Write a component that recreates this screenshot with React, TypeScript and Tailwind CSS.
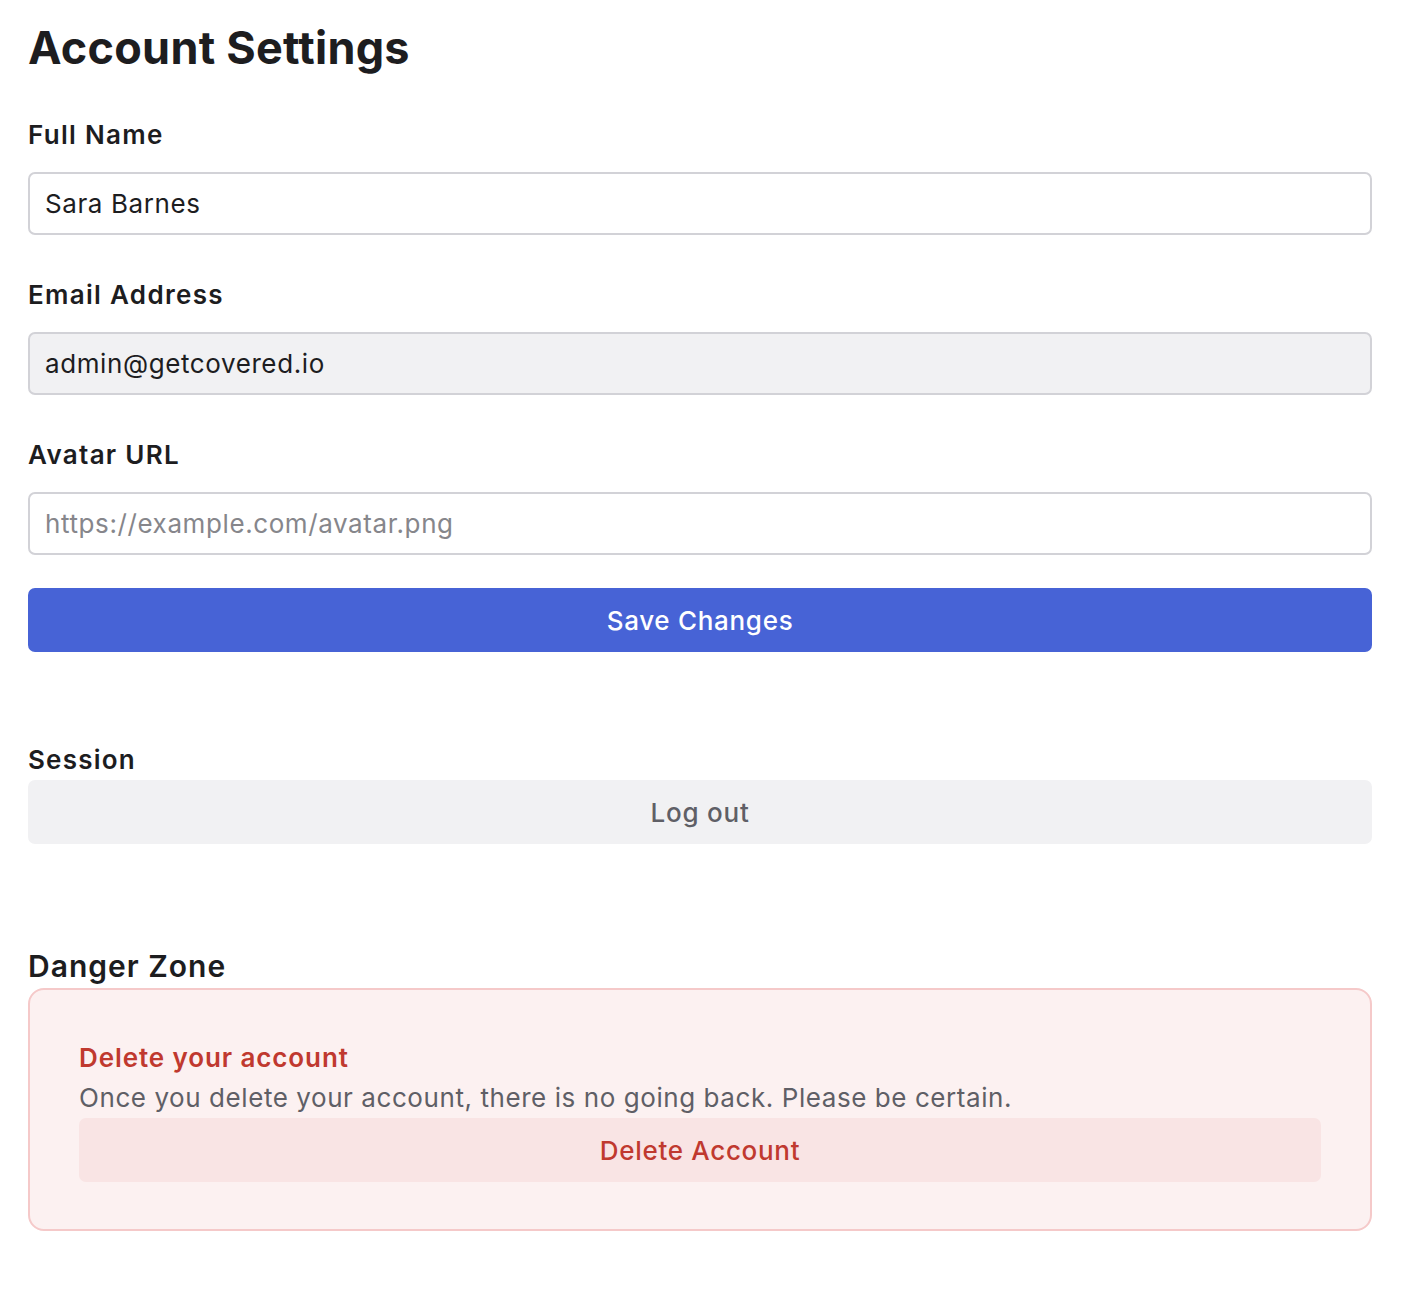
import React, { useState } from "react";

const FONT = { fontFamily: "Inter, 'Noto Sans', sans-serif" };

function Field({
  label,
  value,
  placeholder,
  disabled,
  onChange,
}: {
  label: string;
  value: string;
  placeholder?: string;
  disabled?: boolean;
  onChange?: (v: string) => void;
}) {
  return (
    <label className="flex flex-col">
      <span className="text-[26px] font-semibold leading-[40px] tracking-[1.3px] text-[#1d1d1f]">
        {label}
      </span>
      <input
        type="text"
        value={value}
        placeholder={placeholder}
        disabled={disabled}
        onChange={(e) => onChange?.(e.target.value)}
        className={`mt-[17px] h-[63px] rounded-[7px] border-2 border-[#d2d2d7] px-[15px] text-[26px] tracking-[0.6px] text-[#1d1d1f] outline-none placeholder:text-[#86868b] ${
          disabled ? "bg-[#f1f1f3]" : "bg-white"
        }`}
      />
    </label>
  );
}

export default function App() {
  const [name, setName] = useState("Sara Barnes");
  const [avatar, setAvatar] = useState("");

  return (
    <div style={FONT} className="min-h-screen bg-white pl-[28px] pr-[34px] pt-[18px] pb-[60px]">
      <h1 className="text-[45px] font-bold leading-[60px] tracking-[0.25px] text-[#1d1d1f]">
        Account Settings
      </h1>

      <div className="mt-[37px] flex flex-col gap-[40px]">
        <Field label="Full Name" value={name} onChange={setName} />
        <Field label="Email Address" value="admin@getcovered.io" disabled />
        <Field
          label="Avatar URL"
          value={avatar}
          placeholder="https://example.com/avatar.png"
          onChange={setAvatar}
        />
      </div>

      <button
        type="button"
        className="mt-[33px] h-[64px] w-full rounded-[7px] bg-[#4763d6] text-[26px] font-medium tracking-[0.7px] text-white"
      >
        Save Changes
      </button>

      {/* Session */}
      <h2 className="mt-[88px] text-[26px] font-semibold leading-[40px] tracking-[1.2px] text-[#1d1d1f]">
        Session
      </h2>
      <button
        type="button"
        className="h-[64px] w-full rounded-[7px] bg-[#f1f1f3] text-[26px] font-medium tracking-[0.8px] text-[#5f5f66]"
      >
        Log out
      </button>

      {/* Danger zone */}
      <h2 className="mt-[100px] text-[30px] font-semibold leading-[44px] tracking-[1px] text-[#1d1d1f]">
        Danger Zone
      </h2>
      <div className="rounded-[16px] border-2 border-[#f5c9c9] bg-[#fcf1f1] px-[49px] pt-[48px] pb-[47px]">
        <p className="text-[26px] font-semibold leading-[40px] tracking-[0.9px] text-[#c0392f]">
          Delete your account
        </p>
        <p className="text-[26px] leading-[40px] tracking-[0.57px] text-[#5f5f66]">
          Once you delete your account, there is no going back. Please be certain.
        </p>
        <button
          type="button"
          className="h-[64px] w-full rounded-[7px] bg-[#f9e4e4] text-[26px] font-medium tracking-[0.7px] text-[#c0392f]"
        >
          Delete Account
        </button>
      </div>
    </div>
  );
}
